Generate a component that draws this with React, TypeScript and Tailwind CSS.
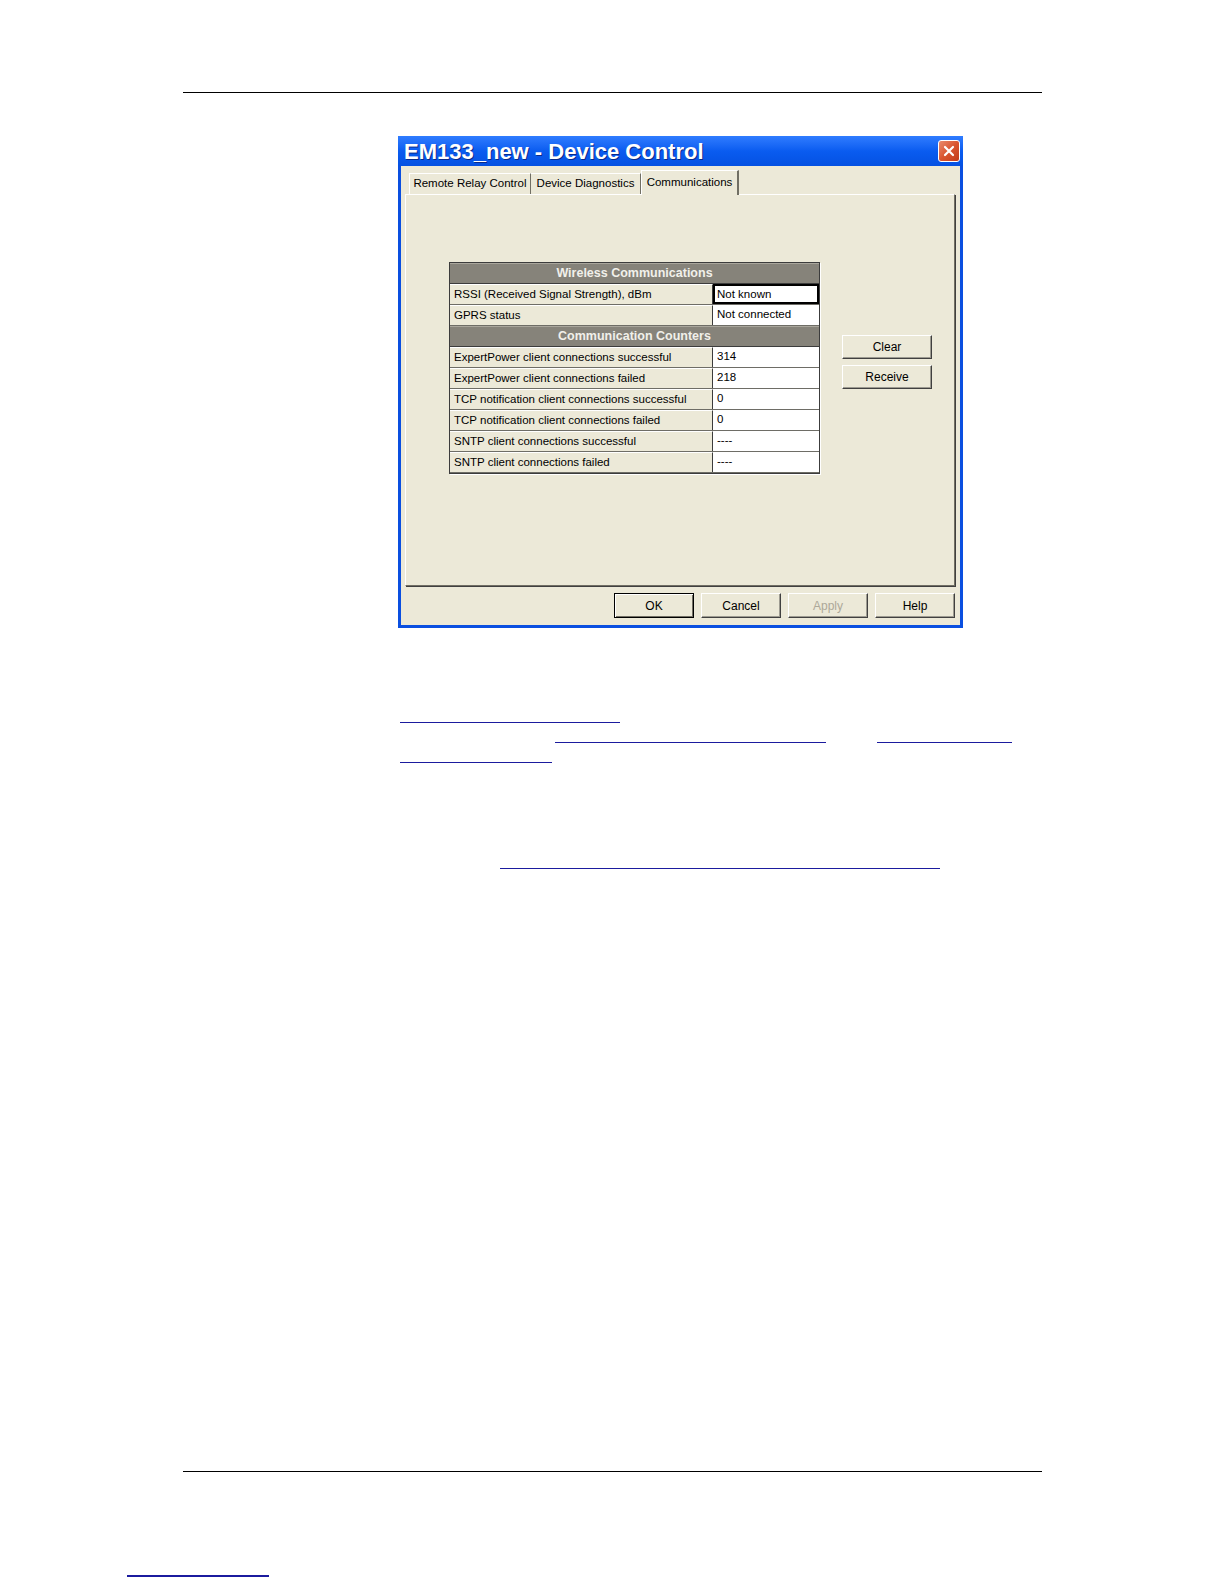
import React from "react";

const ui = { fontFamily: '"Liberation Sans", Arial, sans-serif' };

function HeaderRow({ title }: { title: string }) {
  return (
    <div className="h-[21px] bg-[#86837a] border-t border-t-[#a9a69c] border-b border-b-[#3c3c3c] text-center text-[12.5px] font-bold leading-[19px] text-[#f1f0ea]">
      {title}
    </div>
  );
}

function DataRow({ label, value, focused }: { label: string; value: string; focused?: boolean }) {
  return (
    <div className="flex h-[21px] border-b border-b-[#6e6d66]">
      <div className="w-[263px] border-t border-t-white border-r border-r-[#3c3c3c] pl-[4px] text-[11.5px] leading-[19px] text-black">
        {label}
      </div>
      <div
        className={
          focused
            ? "flex-1 bg-white border-2 border-black pl-[2px] text-[11.5px] leading-[16px] text-black"
            : "flex-1 bg-white pl-[4px] text-[11.5px] leading-[19px] text-black"
        }
      >
        {value}
      </div>
    </div>
  );
}

function Button({ label, w, def, disabled }: { label: string; w: string; def?: boolean; disabled?: boolean }) {
  return (
    <div
      className={
        (def
          ? "border border-black shadow-[inset_1px_1px_0_#ffffff,inset_-1px_-1px_0_#716f64] "
          : "border border-t-white border-l-white border-r-[#404040] border-b-[#404040] shadow-[inset_-1px_-1px_0_#9d9b91] ") +
        w +
        " flex items-center justify-center bg-[#ece9d8] text-[12px] " +
        (disabled ? "text-[#aca899]" : "text-black")
      }
    >
      {label}
    </div>
  );
}

function Dialog() {
  const wireless = [
    { label: "RSSI (Received Signal Strength), dBm", value: "Not known", focused: true },
    { label: "GPRS status", value: "Not connected" },
  ];
  const counters = [
    { label: "ExpertPower client connections successful", value: "314" },
    { label: "ExpertPower client connections failed", value: "218" },
    { label: "TCP notification client connections successful", value: "0" },
    { label: "TCP notification client connections failed", value: "0" },
    { label: "SNTP client connections successful", value: "----" },
    { label: "SNTP client connections failed", value: "----" },
  ];

  return (
    <div className="ml-[398px] mt-[43px] w-[565px] h-[492px] flex flex-col bg-[#0a4fe0]" style={ui}>
      <div className="h-[30px] flex items-center justify-between bg-gradient-to-b from-[#2f7cff] via-[#0a5cf0] to-[#0551e2] pl-[6px] pr-[3px]">
        <span className="text-[22px] font-bold text-white [text-shadow:1px_1px_0_#0a2a8a]">
          EM133_new - Device Control
        </span>
        <div className="w-[22px] h-[22px] rounded-[3px] border border-white bg-gradient-to-br from-[#e98a6c] via-[#d95530] to-[#c23b17] flex items-center justify-center">
          <svg width="12" height="12" viewBox="0 0 12 12">
            <path d="M2 2 L10 10 M10 2 L2 10" stroke="white" strokeWidth="2.2" strokeLinecap="round" />
          </svg>
        </div>
      </div>

      <div className="flex-1 mx-[3px] mb-[3px] bg-[#ece9d8] flex flex-col pt-[4px]">
        <div className="flex items-end h-[24px] pl-[8px]">
          <div className="w-[122px] h-[21px] border-t border-l border-t-white border-l-white border-r border-r-[#716f64] flex items-center justify-center text-[11.5px] text-black">
            Remote Relay Control
          </div>
          <div className="w-[110px] h-[21px] border-t border-t-white border-r border-r-[#716f64] flex items-center justify-center text-[11.5px] text-black">
            Device Diagnostics
          </div>
          <div className="relative z-10 -mb-px w-[98px] h-[25px] bg-[#ece9d8] border-t border-l border-t-white border-l-white border-r-2 border-r-[#716f64] flex items-start justify-center pt-[3px] text-[11.5px] text-black">
            Communications
          </div>
        </div>

        <div className="ml-[4px] w-[550px] h-[392px] border border-t-white border-l-white border-r-[#716f64] border-b-[#716f64] shadow-[1px_1px_0_#404040] flex items-start pl-[43px] pt-[67px]">
          <div className="w-[371px] border border-[#3c3c3c] bg-[#ece9d8] shadow-[1px_1px_0_#ffffff]">
            <HeaderRow title="Wireless Communications" />
            {wireless.map((r) => (
              <DataRow key={r.label} label={r.label} value={r.value} focused={r.focused} />
            ))}
            <HeaderRow title="Communication Counters" />
            {counters.map((r) => (
              <DataRow key={r.label} label={r.label} value={r.value} />
            ))}
          </div>
          <div className="ml-[22px] mt-[73px] flex flex-col gap-[6px]">
            <div className="h-[24px] flex">
              <Button label="Clear" w="w-[90px]" />
            </div>
            <div className="h-[24px] flex">
              <Button label="Receive" w="w-[90px]" />
            </div>
          </div>
        </div>

        <div className="mt-[7px] h-[25px] w-[554px] flex justify-end gap-[7px]">
          <Button label="OK" w="w-[80px]" def />
          <Button label="Cancel" w="w-[80px]" />
          <Button label="Apply" w="w-[80px]" disabled />
          <Button label="Help" w="w-[80px]" />
        </div>
      </div>
    </div>
  );
}

export default function App() {
  return (
    <div className="w-[1224px] h-[1584px] bg-white flex flex-col items-start pt-[92px]">
      <div className="ml-[183px] w-[859px] h-px bg-black" />

      <Dialog />

      <div className="ml-[400px] mt-[94px] w-[220px] h-px bg-[#1b1b9e]" />
      <div className="mt-[19px] flex">
        <div className="ml-[555px] w-[271px] h-px bg-[#1b1b9e]" />
        <div className="ml-[51px] w-[135px] h-px bg-[#1b1b9e]" />
      </div>
      <div className="ml-[400px] mt-[19px] w-[152px] h-px bg-[#1b1b9e]" />
      <div className="ml-[500px] mt-[105px] w-[440px] h-px bg-[#1b1b9e]" />

      <div className="ml-[183px] mt-[602px] w-[859px] h-px bg-black" />
      <div className="ml-[127px] mt-[103px] w-[142px] h-[2px] bg-[#1b1b9e]" />
    </div>
  );
}
